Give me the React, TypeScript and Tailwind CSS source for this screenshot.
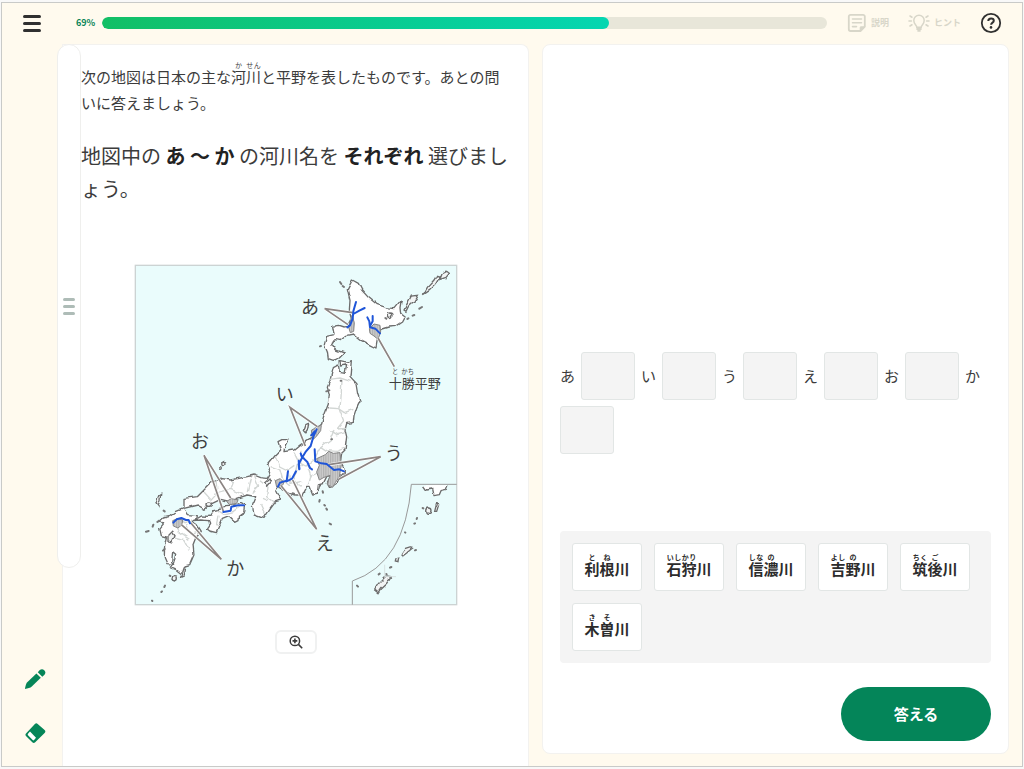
import { Fragment } from "react";

type Part = { text: string; ruby?: string };

const PROGRESS = 70;

const slots = ["あ", "い", "う", "え", "お", "か"];

const choices: Part[][] = [
  [{ text: "利", ruby: "と" }, { text: "根", ruby: "ね" }, { text: "川" }],
  [{ text: "石狩", ruby: "いしかり" }, { text: "川" }],
  [{ text: "信", ruby: "しな" }, { text: "濃", ruby: "の" }, { text: "川" }],
  [{ text: "吉", ruby: "よし" }, { text: "野", ruby: "の" }, { text: "川" }],
  [{ text: "筑", ruby: "ちく" }, { text: "後", ruby: "ご" }, { text: "川" }],
  [{ text: "木", ruby: "き" }, { text: "曽", ruby: "そ" }, { text: "川" }],
];

function Furigana({ parts }: { parts: Part[] }) {
  return (
    <>
      {parts.map((part) =>
        part.ruby ? (
          <ruby key={part.text}>
            {part.text}
            <rt className="text-[7px] leading-none">{part.ruby}</rt>
          </ruby>
        ) : (
          <Fragment key={part.text}>{part.text}</Fragment>
        ),
      )}
    </>
  );
}

function NoteIcon() {
  return (
    <svg viewBox="0 0 20 20" className="size-5" fill="none" stroke="currentColor" aria-hidden="true">
      <path
        d="M3.5 1.8h12.6a1.7 1.7 0 0 1 1.7 1.7v10.2l-4.3 4.3h-10a1.7 1.7 0 0 1-1.7-1.7V3.5a1.7 1.7 0 0 1 1.7-1.7z"
        strokeWidth="1.8"
      />
      <path d="M5.5 6h9M5.5 9.8h9M5.5 13.6h4" strokeWidth="1.6" strokeLinecap="round" />
      <path d="M13 18.2v-3.6a1 1 0 0 1 1-1h4z" fill="currentColor" strokeWidth="0.6" />
    </svg>
  );
}

function BulbIcon() {
  return (
    <svg viewBox="0 0 22 20" className="h-5 w-[22px]" fill="none" stroke="currentColor" aria-hidden="true">
      <path
        d="M8.8 14.2c0-2-3-3-3-6.8a5.2 5.2 0 0 1 10.4 0c0 3.8-3 4.8-3 6.8z"
        strokeWidth="1.5"
      />
      <path d="M8.4 16h5.2M9.4 17.8h3.2" strokeWidth="1.8" />
      <path
        d="M1 8h2.4M18.6 8H21M2 3l2 1.2M20 3l-2 1.2M2 13l2-1.2M20 13l-2-1.2"
        strokeWidth="1.6"
        strokeLinecap="round"
      />
    </svg>
  );
}

function HelpIcon() {
  return (
    <svg viewBox="0 0 22 22" className="size-[22px]" fill="none" stroke="currentColor" aria-hidden="true">
      <circle cx="11" cy="11" r="9.2" strokeWidth="1.8" />
      <path d="M8.3 9.1c0-1.7 1.1-2.7 2.8-2.7 1.6 0 2.7.9 2.7 2.3 0 1.9-2.7 1.9-2.7 4" strokeWidth="2" />
      <circle cx="11" cy="15.4" r="1.3" fill="currentColor" stroke="none" />
    </svg>
  );
}

function PencilIcon() {
  return (
    <svg viewBox="0 0 22 22" className="size-[22px]" fill="currentColor" aria-hidden="true">
      <path d="M1 21c.2-2.6.9-5 2-6.6L12.4 5.6l4.4 4.2-9 8.8C6.3 19.9 3.8 20.8 1 21z" />
      <path d="M13.8 4.3l2-2.2a3.3 3.3 0 0 1 4.7 4.6l-2.2 2z" />
    </svg>
  );
}

function EraserIcon() {
  return (
    <svg viewBox="0 0 22 22" className="size-[22px]" aria-hidden="true">
      <path
        d="M10.9 1.9a2 2 0 0 1 2.8 0l6.9 6.1a2 2 0 0 1 0 2.9l-9.4 9.4a2 2 0 0 1-2.9 0l-6.1-6.1a2 2 0 0 1 0-2.9z"
        fill="currentColor"
      />
      <path d="M6 9.5l6 6.3-1.9 2.3a1 1 0 0 1-1.4 0L4 13.2a1 1 0 0 1 0-1.4z" fill="#fff" />
    </svg>
  );
}

function ZoomInIcon() {
  return (
    <svg viewBox="0 0 14 14" className="size-3.5" fill="none" stroke="currentColor" aria-hidden="true">
      <circle cx="5.9" cy="5.9" r="4.7" strokeWidth="1.5" />
      <path d="M9.4 9.4l3.8 3.8M3.5 5.9h4.8M5.9 3.5v4.8" strokeWidth="1.6" />
    </svg>
  );
}

function JapanMap() {
  return (
    <svg
      viewBox="0 0 972 1026"
      className="w-[324px]"
      role="img"
      aria-label="日本の主な河川と平野の地図"
    >
      <defs>
        {/* roughens the coast lines */}
        <filter
          id="coast"
          x="0"
          y="0"
          width="972"
          height="1026"
          filterUnits="userSpaceOnUse"
          colorInterpolationFilters="sRGB"
        >
          <feTurbulence type="fractalNoise" baseFrequency="0.05" numOctaves="1" seed="4" />
          <feDisplacementMap in="SourceGraphic" scale="14" xChannelSelector="R" yChannelSelector="G" />
          <feGaussianBlur stdDeviation="1" />
        </filter>
        <pattern id="plain" width="7" height="7" patternUnits="userSpaceOnUse">
          <rect width="7" height="7" fill="#cdcdcd" />
          <path d="M2 0v7" stroke="#999" strokeWidth="2" />
        </pattern>
      </defs>

      <rect x="4" y="4" width="964" height="1018" fill="#eafcfc" stroke="#ccd3d3" strokeWidth="4" />

      <g filter="url(#coast)" fill="#fff" stroke="#6c6c6c" strokeWidth="4" strokeLinejoin="round">
        {/* Hokkaido */}
        <path d="M655 48l18 10 10 20 20 22 27 22 28 9 22 3 13-16 9-11-4 24 2 20 13 10-7 13-20 13-23 2-20 6-13 12v20l-4 25-20-10-23-12-25-20-20 4-20 16-15-3-10 15 10 15 28 10-15 15-18 10-15-5-3-23-9-22 7-25 22-5-4-25 17-3 15 5 15-2 10-20-7-25 2-30-8-35z" />
        {/* Honshu */}
        <path d="M598 308l15-8 3 22 17 3 5-23-18 4-2-16 25 5 9-5-4 50 18 20 5 30 7 20-10 20-8 25-2 20-20 3-5 20 5 20-5 40-10 10-3 20 13 35-15 15-8 20-22 15-8-15 13-25-15 5-10 20-15 5-3 25-14 2-8-20h-10l-12 23h-23l-18-5-20-10-10-15-10 15 15 30-15 5-15 20-20 30-30-10-5-30 10-25-25-5-30 10-20 10-30-7-25 12-22 18-23-13-40 10v-30l40-5 40-40 30-15 30 5 50-10 20-5 20 8 20 2 10-17-10-23 25-30 15-15-8-25 13-7 17 2-10 20-2 15 30-5 18-15 30-20 7-25 13-3 15-15 5-20 15-40 3-30-6-20 8-20z" />
        {/* Shikoku */}
        <path d="M228 757l10-17 22-5 15-10 25-2 20-8 15 8-3 20-15 10-2 17-10 5-20-20-20 8-8 20-10 23-20-5-10-8 10-15-3-8-24-2-20 2 22-14z" />
        {/* Kyushu */}
        <path d="M88 762l20-5 20-15 20-8 12 18 30 3-2 12-14 5 15 10 13 20-17 20-8 20 3 30-13 30-14 4-10 24-18-14-16-6 10-14 6-25-9-8-3 30 6 8-20-2-8-18 1-40 5-22-15-4-5-22 12-14-10-8z" />
        {/* Inset corner of Kyushu */}
        <path d="M868 664l10 14 18-3 4 20 16-3 5-12 16-4 5-12" />
      </g>

      {/* Prefecture borders */}
      <g fill="none" stroke="#d2d6d4" strokeWidth="4" filter="url(#coast)">
        <path d="M588 346l30-4 32 10M624 350l-3 50-4 40 12 30-20 25M583 432l30 2 18 12 27-10M609 495l28-2M600 498l-12 30-28 20-20 40" />
        <path d="M560 548l18 12 30 2 25-10M590 500l20 12 24-6M540 588l-25 18-20-10-15-30M490 600l-10 40 20 30M520 606l10 30 28-12M530 636l-8 30" />
        <path d="M425 578l12 28 24 12 20-14M410 608l28 10 8 30 22 18M462 618l6 40 34-8M420 648l15 20M500 560l10 30" />
        <path d="M362 636l12 30-18 20M378 650l24 20-4 28 22 18M384 700l18 8M380 720l14 30M350 640l-10 44M300 650l-10 26 38 16M290 676l-50 12M246 650l4 38-20 22M210 684l20 22" />
        <path d="M250 738l18 12 30-8 20-14M255 755l-6 30M130 764l20 12 24-8M128 782l8 24 30 20M120 822l30 8 16 30M158 780l10 30 22-8" />
      </g>

      {/* Plains */}
      <g fill="url(#plain)" stroke="#858585" strokeWidth="3">
        <path d="M644 190l10-36 7 22-2 26-10 4z" />
        <path d="M706 194l14-14 18 4 2 20-8 22-12-10-12-8z" />
        <path d="M548 584l26-12 10-10 14 6 20-2 4 36-6 36-12 18-8 14-16-8 8-28-18 6-14 8-8-24 8-20z" />
        <path d="M532 500l16-12 14-4-2 16-12 16-10 10z" />
        <path d="M424 650l14-6 12 10-6 14-16 2zM116 770l14-6 16 4-2 14-12 10-14-6zM278 712l14-8 20 4-4 10-22 4z" />
      </g>

      {/* Small islands */}
      <g fill="#f2f4f4" stroke="#6c6c6c" strokeWidth="4" filter="url(#coast)">
        <path d="M810 138l10-20 12-22 18-2-10 18-16 14-8 16zM868 92l12-22 20-22 8-14 10 4-14 24-18 18zM918 46l6-16 14-8 8 6-10 12zM508 500l6-18 10-4-2 16-8 12z" />
        <path d="M66 716l8-24 6-4-2 22-6 14zM140 940l6-22 6-2-4 20zM722 978l14-22 20-20 14 2-12 20-18 16-8 12zM802 868l10-14 18-6 8 2-14 12-16 12zM902 742l6-24 6 4-6 20z" />
        <path d="M392 656l16-14 4 8-14 16zM102 816l14-14 8 12-10 20-12-4zM786 884l8-2-2 14-8-2z" />
        <circle cx="122" cy="943" r="8" />
        <circle cx="883" cy="740" r="8" />
        <circle cx="268" cy="600" r="5" />
        <circle cx="258" cy="612" r="4" />
        <circle cx="224" cy="722" r="8" />
        <circle cx="767" cy="154" r="7" />
      </g>
      <path
        d="M618 54l4 6M626 66l4 3M820 165l3-2M836 155l5-2M856 134l8-5M754 162l3 2M577 382l9-3M558 247l3-1M566 682l1 4M557 708l-1 5M571 723l2 2M577 734l2 3M587 779l4 2M89 740l3 2M70 774l5-4M56 788l2-6M36 803l8-2M87 860l5-5M107 935l2 1M91 969l2-4M82 984l2-2M54 1010l1 1M866 732l2 1M848 765l1-3M841 779l2-1M813 805l1 1M843 859l3-1M768 911l4-2M734 931l3-2M757 930l1 1M669 965l3 3M620 350h2M592 526h2M476 688l4 1M260 644h3"
        stroke="#777"
        strokeWidth="6"
        strokeLinecap="round"
        fill="none"
      />

      {/* Inset frame */}
      <path d="M968 661H832q-18 236-177 290v71" fill="none" stroke="#999" strokeWidth="3" />
      <path d="M752 902v36h34" fill="none" stroke="#d8e2e2" strokeWidth="3" />

      {/* Leader lines */}
      <g fill="none" stroke="#fff" strokeWidth="9">
        <path d="M656 146l-84-12 70 48M732 222l49 86M514 546l-46-116 82 58M584 602l156-24-126 68M440 664l108 132-72-148M290 702l-80-128 58 168M142 782l120 104-92-110" />
      </g>
      <g fill="none" stroke="#8b8482" strokeWidth="5">
        <path d="M656 146l-84-12 70 48M732 222l49 86M514 546l-46-116 82 58M584 602l156-24-126 68M440 664l108 132-72-148M290 702l-80-128 58 168M142 782l120 104-92-110" />
      </g>

      {/* Rivers */}
      <g fill="none" stroke="#1f55d8" strokeWidth="6" strokeLinecap="round" strokeLinejoin="round">
        <path d="M666 114l-8 28-2 22-8 20-8 6M658 150l18-10 16-8" />
        <path d="M700 160l6 12 2 18 16 4 14 14M716 156v16l-8 14" />
        <path d="M548 496l-10 22-8 28-14 16-10 16-12 22 2 16M506 580l14 14 8 18 6 4M542 502l-10 12M504 580l-4-12" />
        <path d="M542 556l2 36 18 6 16 2 22 18 16-2 14 6" />
        <path d="M432 668l6-12 20-6 4-28M458 652l16-8 12-22M494 590l2 24" />
        <path d="M268 744l22-4 2-12 20-4h18" />
        <path d="M118 776l10-10 14-4 14 6h8l4 10" />
      </g>

      <g fill="#3e3e3e" fontSize="54" textAnchor="middle">
        <text x="528" y="149">あ</text>
        <text x="452" y="411">い</text>
        <text x="779" y="589">う</text>
        <text x="572" y="859">え</text>
        <text x="198" y="551">お</text>
        <text x="304" y="933">か</text>
      </g>
      <g fill="#3e3e3e">
        <text x="764" y="371" fontSize="39">十勝平野</text>
        <text x="774" y="330" fontSize="19">と</text>
        <text x="802" y="330" fontSize="19">かち</text>
      </g>
    </svg>
  );
}

export default function App() {
  return (
    <div
      className="h-screen bg-[#f8f8f8] px-px pt-0.5 pb-0.5 font-['Noto_Sans_CJK_JP','Noto_Sans',sans-serif] text-[#3c3c3c]"
      lang="ja"
    >
      <div className="flex h-full flex-col border border-[#c9cac8] bg-[#fffaee]">
        <header className="flex h-10 shrink-0 items-center pr-5 pl-[21px]">
          <button type="button" aria-label="メニュー" className="flex w-[18px] flex-col gap-1">
            <span className="h-[3px] rounded-full bg-[#303030]" />
            <span className="h-[3px] rounded-full bg-[#303030]" />
            <span className="h-[3px] rounded-full bg-[#303030]" />
          </button>
          <span className="ml-[35px] w-[26px] text-[9px] font-bold text-[#0b8558]">69%</span>
          <div className="h-3 flex-1 overflow-hidden rounded-full bg-[#e8e6d9]">
            <div
              className="h-full rounded-full bg-linear-to-r from-[#12bf65] to-[#05d6b1]"
              style={{ width: `${PROGRESS}%` }}
            />
          </div>
          <button type="button" disabled className="ml-5 flex items-center gap-1 text-[9px] font-bold text-[#d8d6c9]">
            <NoteIcon />
            説明
          </button>
          <button type="button" disabled className="ml-[19px] flex items-center gap-1 text-[9px] font-bold text-[#d8d6c9]">
            <BulbIcon />
            ヒント
          </button>
          <button type="button" aria-label="ヘルプ" className="ml-[19px] text-[#303030]">
            <HelpIcon />
          </button>
        </header>

        <div className="flex min-h-0 flex-1 pt-px">
          <aside className="flex w-[60px] shrink-0 flex-col items-center justify-end gap-8 pr-px pl-1.5 pb-[22px] text-[#058558]">
            <button type="button" aria-label="ペン">
              <PencilIcon />
            </button>
            <button type="button" aria-label="消しゴム">
              <EraserIcon />
            </button>
          </aside>

          <main className="grid flex-1 grid-cols-2 gap-[13px] pr-[13px]">
            <section className="relative rounded-tr-lg border border-b-0 border-[#f3f2ef] bg-white px-[18px] pt-4">
              <div className="absolute -top-px -left-1.5 flex h-[524px] w-6 flex-col items-center justify-center gap-1 rounded-full border border-[#efefed] bg-white">
                <span className="h-[3px] w-3 rounded-full bg-[#aebcb7]" />
                <span className="h-[3px] w-3 rounded-full bg-[#aebcb7]" />
                <span className="h-[3px] w-3 rounded-full bg-[#aebcb7]" />
              </div>

              <p className="relative text-[15px] leading-[26px]">
                次の地図は日本の主な
                <Furigana parts={[{ text: "河", ruby: "か" }, { text: "川", ruby: "せん" }]} />
                と平野を表したものです。あとの問いに答えましょう。
              </p>
              <h1 className="relative mt-[23px] text-xl leading-[33px]">
                地図中の <b className="text-[#222]">あ 〜 か</b> の河川名を <b className="text-[#222]">それぞれ</b> 選びましょう。
              </h1>

              <figure className="mt-[59px] flex flex-col items-center gap-6">
                <JapanMap />
                <button
                  type="button"
                  aria-label="地図を拡大"
                  className="flex h-6 w-[42px] items-center justify-center rounded-md border-2 border-[#f0f1f1] bg-white"
                >
                  <ZoomInIcon />
                </button>
              </figure>
            </section>

            <section className="mb-3 flex flex-col justify-end rounded-lg border border-[#f3f2ef] bg-white px-[17px] pb-3">
              <div className="flex flex-wrap items-center gap-1.5 text-[15px]">
                {slots.map((slot) => (
                  <Fragment key={slot}>
                    <span className="w-[15px]">{slot}</span>
                    <button
                      type="button"
                      aria-label={`${slot}の解答欄`}
                      className="h-12 w-[54px] rounded-[3px] border border-[#e2e6e5] bg-[#f4f4f4]"
                    />
                  </Fragment>
                ))}
              </div>

              <div className="mt-[77px] flex flex-wrap gap-3 rounded-sm bg-[#f4f4f4] p-3">
                {choices.map((choice) => (
                  <button
                    key={choice[0].text}
                    type="button"
                    className="h-12 w-[70px] rounded-[3px] border border-[#e2e6e5] bg-white pt-1 text-[15px] leading-6 font-bold text-[#2c2c2c]"
                  >
                    <Furigana parts={choice} />
                  </button>
                ))}
              </div>

              <button
                type="button"
                className="mt-6 h-[54px] w-[150px] self-end rounded-full bg-[#048559] text-[15px] font-bold text-white"
              >
                答える
              </button>
            </section>
          </main>
        </div>
      </div>
    </div>
  );
}
